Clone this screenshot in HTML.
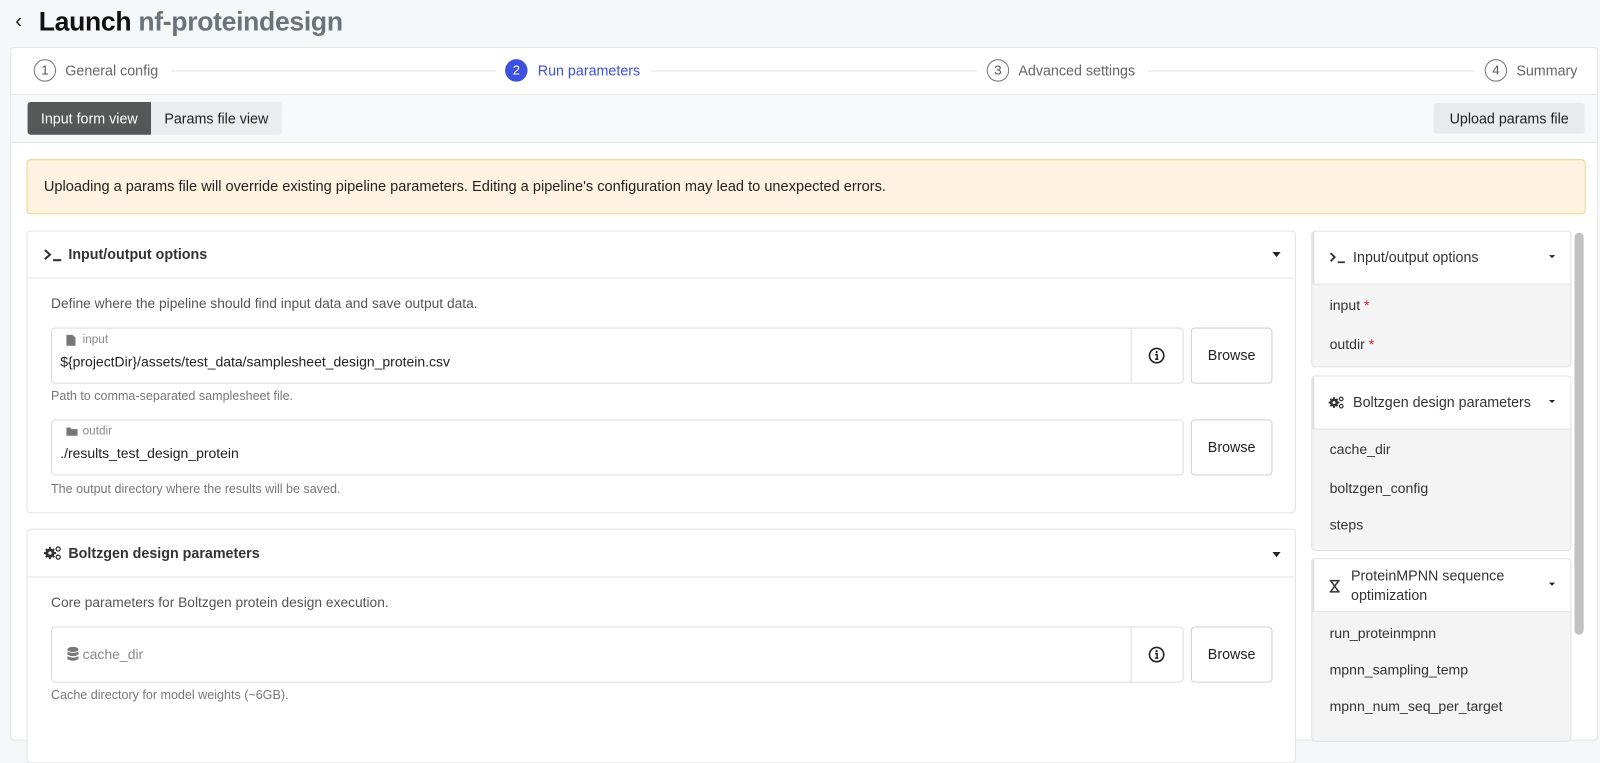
<!DOCTYPE html>
<html><head><meta charset="utf-8"><style>
*{box-sizing:border-box;margin:0;padding:0}
body{width:1600px;height:718px;overflow:hidden;background:#f6f7f8;font-family:"Liberation Sans",sans-serif;color:#222;position:relative}
#wrap{position:absolute;left:0;top:0;width:1568px;height:704px;transform:scale(1.0204);transform-origin:0 0}
.a{position:absolute}
.t{white-space:nowrap}
.circ{position:absolute;width:22px;height:22px;border:1px solid #777;border-radius:50%;font-size:13px;color:#555;text-align:center;line-height:20px}
.line{position:absolute;height:1px;background:#e2e2e2;top:69px}
.step{position:absolute;top:61px;font-size:14px;color:#666}
.card{position:absolute;background:#fff;border:1px solid #e3e3e3;border-radius:4px}
.hdr{position:absolute;left:0;right:0;top:0;border-bottom:1px solid #e6e6e6}
.ht{position:absolute;font-size:14px;font-weight:bold;color:#333}
.caret{position:absolute;width:0;height:0;border-left:4px solid transparent;border-right:4px solid transparent;border-top:5px solid #222}
.desc{position:absolute;font-size:13.5px;color:#555}
.grp{position:absolute;border:1px solid #dcdcdc;border-radius:4px;background:#fff}
.lbl{position:absolute;font-size:11.5px;color:#888}
.val{position:absolute;font-size:13.7px;color:#222}
.help{position:absolute;font-size:12.3px;color:#777}
.btn{position:absolute;border:1px solid #cfcfcf;border-radius:4px;background:#fff;font-size:14px;color:#222;text-align:center;line-height:52px}
.info{position:absolute;top:0;bottom:0;width:51px;right:0;border-left:1px solid #dcdcdc}
.scard{position:absolute;left:1285px;width:255px;background:#f4f4f4;border:1px solid #e2e2e2;border-radius:4px;overflow:hidden}
.sh{position:absolute;left:0;right:0;top:0;background:#fff;border-bottom:1px solid #e2e2e2;border-left:2px solid #ddd}
.si{position:absolute;left:17px;font-size:13.8px;color:#333}
.req{color:#e02020}
</style></head><body><div id="wrap">
<div class="a t" style="left:15px;top:10px;font-size:20px;color:#222">&#8249;</div>
<div class="a t" style="left:38px;top:6px;font-size:26px;font-weight:bold;color:#111;letter-spacing:-0.3px">Launch <span style="color:#6c737a">nf-proteindesign</span></div>

<div class="a" style="left:10px;top:46px;width:1556px;height:680px;background:#fff;border:1px solid #e6e6e6;border-radius:4px"></div>
<div class="circ" style="left:33px;top:58px">1</div><div class="step t" style="left:64px">General config</div>
<div class="line" style="left:168px;width:318px"></div>
<div class="circ" style="left:495px;top:58px;background:#3d51e0;border-color:#3d51e0;color:#fff">2</div><div class="step t" style="left:527px;color:#3d51e0">Run parameters</div>
<div class="line" style="left:638px;width:319px"></div>
<div class="circ" style="left:967px;top:58px">3</div><div class="step t" style="left:998px">Advanced settings</div>
<div class="line" style="left:1125px;width:320px"></div>
<div class="circ" style="left:1455px;top:58px">4</div><div class="step t" style="left:1486px">Summary</div>

<div class="a" style="left:11px;top:92px;width:1554px;height:48px;background:#f7f8f9;border-top:1px solid #e6e6e6;border-bottom:1px solid #e6e6e6"></div>
<div class="a" style="left:27px;top:100px;width:249px;height:32px;background:#ebeced;border-radius:3px"></div>
<div class="a t" style="left:27px;top:100px;width:121px;height:32px;background:#555856;color:#fff;font-size:14px;line-height:32px;text-align:center;border-radius:3px 0 0 3px">Input form view</div>
<div class="a t" style="left:148px;top:100px;width:128px;height:32px;color:#222;font-size:14px;line-height:32px;text-align:center">Params file view</div>
<div class="a t" style="left:1405px;top:101px;width:148px;height:30px;background:#e9eaeb;color:#222;font-size:14px;line-height:30px;text-align:center;border-radius:3px">Upload params file</div>

<div class="a t" style="left:26px;top:156px;width:1528px;height:54px;background:#fef3e0;border:1px solid #f6d18c;border-radius:4px;font-size:14.3px;line-height:52px;padding-left:16px;color:#222">Uploading a params file will override existing pipeline parameters. Editing a pipeline's configuration may lead to unexpected errors.</div>

<div class="card" style="left:26px;top:226px;width:1244px;height:277px">
 <div class="hdr" style="height:46px"></div>
 <svg class="a" style="left:15px;top:16px" width="20" height="14" viewBox="0 0 20 14"><path d="M2 2l5 4.5L2 11" fill="none" stroke="#333" stroke-width="2"/><path d="M10 12h8" stroke="#333" stroke-width="2"/></svg>
 <div class="ht t" style="left:40px;top:14px">Input/output options</div>
 <div class="caret" style="left:1220px;top:20px"></div>
 <div class="desc t" style="left:23px;top:63px">Define where the pipeline should find input data and save output data.</div>
 <div class="grp" style="left:23px;top:94px;width:1110px;height:55px"><div class="info"><svg class="a" style="left:16px;top:18px" width="17" height="17" viewBox="0 0 17 17"><circle cx="8.5" cy="8.5" r="7" fill="none" stroke="#222" stroke-width="1.6"/><circle cx="8.5" cy="5" r="1.1" fill="#222"/><path d="M7 7.5h2v4.5M7 12h3.2" stroke="#222" stroke-width="1.5" fill="none"/></svg></div>
  <svg class="a" style="left:14px;top:6px" width="9" height="11"><path d="M0 0h6l3 3v8H0z" fill="#777"/></svg>
  <div class="lbl t" style="left:30px;top:5px">input</div>
  <div class="val t" style="left:8px;top:25px">${projectDir}/assets/test_data/samplesheet_design_protein.csv</div></div>
 <div class="btn" style="left:1140px;top:94px;width:80px;height:55px">Browse</div>
 <div class="help t" style="left:23px;top:154px">Path to comma-separated samplesheet file.</div>
 <div class="grp" style="left:23px;top:184px;width:1110px;height:55px">
  <svg class="a" style="left:14px;top:6px" width="12" height="10"><path d="M0 1h4l1 1.5h6V9H0z" fill="#777"/></svg>
  <div class="lbl t" style="left:30px;top:5px">outdir</div>
  <div class="val t" style="left:8px;top:25px">./results_test_design_protein</div></div>
 <div class="btn" style="left:1140px;top:184px;width:80px;height:55px">Browse</div>
 <div class="help t" style="left:23px;top:245px">The output directory where the results will be saved.</div>
</div>

<div class="card" style="left:26px;top:518px;width:1244px;height:230px">
 <div class="hdr" style="height:47px"></div>
 <svg class="a" style="left:16px;top:16px" width="18" height="14" viewBox="0 0 18 14"><circle cx="6" cy="7" r="4.5" fill="#333"/><path d="M6 1v12M0 7h12M2 3l8 8M10 3l-8 8" stroke="#333" stroke-width="2"/><circle cx="6" cy="7" r="1.6" fill="#fff"/><circle cx="14" cy="3" r="2" fill="none" stroke="#333" stroke-width="1.3"/><circle cx="14" cy="11" r="2" fill="none" stroke="#333" stroke-width="1.3"/></svg>
 <div class="ht t" style="left:40px;top:15px">Boltzgen design parameters</div>
 <div class="caret" style="left:1220px;top:22px"></div>
 <div class="desc t" style="left:23px;top:64px">Core parameters for Boltzgen protein design execution.</div>
 <div class="grp" style="left:23px;top:95px;width:1110px;height:55px"><div class="info"><svg class="a" style="left:16px;top:18px" width="17" height="17" viewBox="0 0 17 17"><circle cx="8.5" cy="8.5" r="7" fill="none" stroke="#222" stroke-width="1.6"/><circle cx="8.5" cy="5" r="1.1" fill="#222"/><path d="M7 7.5h2v4.5M7 12h3.2" stroke="#222" stroke-width="1.5" fill="none"/></svg></div>
  <svg class="a" style="left:15px;top:19px" width="11" height="14" viewBox="0 0 11 14"><ellipse cx="5.5" cy="2.5" rx="5.5" ry="2.5" fill="#777"/><path d="M0 4.5q5.5 3 11 0v3q-5.5 3-11 0zM0 9q5.5 3 11 0v3q-5.5 3-11 0z" fill="#777"/></svg>
  <div class="val t" style="left:30px;top:19px;color:#888">cache_dir</div></div>
 <div class="btn" style="left:1140px;top:95px;width:80px;height:55px">Browse</div>
 <div class="help t" style="left:23px;top:155px">Cache directory for model weights (~6GB).</div>
</div>

<div class="scard" style="top:226px;height:134px"><div class="sh" style="height:52px"></div>
 <svg class="a" style="left:16px;top:19px" width="17" height="13" viewBox="0 0 17 13"><path d="M2 2l4 4-4 4" fill="none" stroke="#333" stroke-width="1.8"/><path d="M9 11h7" stroke="#333" stroke-width="1.8"/></svg>
 <div class="a t" style="left:40px;top:17px;font-size:14px;color:#333">Input/output options</div><div class="caret" style="left:232px;top:23px;border-width:3px 3px 0 3px"></div>
 <div class="si t" style="top:65px">input <span class="req">*</span></div><div class="si t" style="top:103px">outdir <span class="req">*</span></div></div>

<div class="scard" style="top:368px;height:172px"><div class="sh" style="height:52px"></div>
 <svg class="a" style="left:16px;top:19px" width="16" height="13" viewBox="0 0 18 14"><circle cx="6" cy="7" r="4.5" fill="#333"/><path d="M6 1v12M0 7h12M2 3l8 8M10 3l-8 8" stroke="#333" stroke-width="2"/><circle cx="6" cy="7" r="1.6" fill="#fff"/><circle cx="14" cy="3" r="2" fill="none" stroke="#333" stroke-width="1.3"/><circle cx="14" cy="11" r="2" fill="none" stroke="#333" stroke-width="1.3"/></svg>
 <div class="a t" style="left:40px;top:17px;font-size:14px;color:#333">Boltzgen design parameters</div><div class="caret" style="left:232px;top:23px;border-width:3px 3px 0 3px"></div>
 <div class="si t" style="top:64px">cache_dir</div><div class="si t" style="top:102px">boltzgen_config</div><div class="si t" style="top:138px">steps</div></div>

<div class="scard" style="top:547px;height:180px"><div class="sh" style="height:52px"></div>
 <svg class="a" style="left:17px;top:20px" width="10" height="13" viewBox="0 0 10 13"><path d="M0 1h10M0 12h10M1 1l8 11M9 1L1 12" stroke="#333" stroke-width="1.5" fill="none"/></svg>
 <div class="a" style="left:38px;top:7px;font-size:14px;color:#333;line-height:19px">ProteinMPNN sequence<br>optimization</div><div class="caret" style="left:232px;top:23px;border-width:3px 3px 0 3px"></div>
 <div class="si t" style="top:65px">run_proteinmpnn</div><div class="si t" style="top:101px">mpnn_sampling_temp</div><div class="si t" style="top:137px">mpnn_num_seq_per_target</div></div>

<div class="a" style="left:1543px;top:228px;width:9px;height:394px;background:#c2c2c2;border-radius:5px"></div>
</div></body></html>
